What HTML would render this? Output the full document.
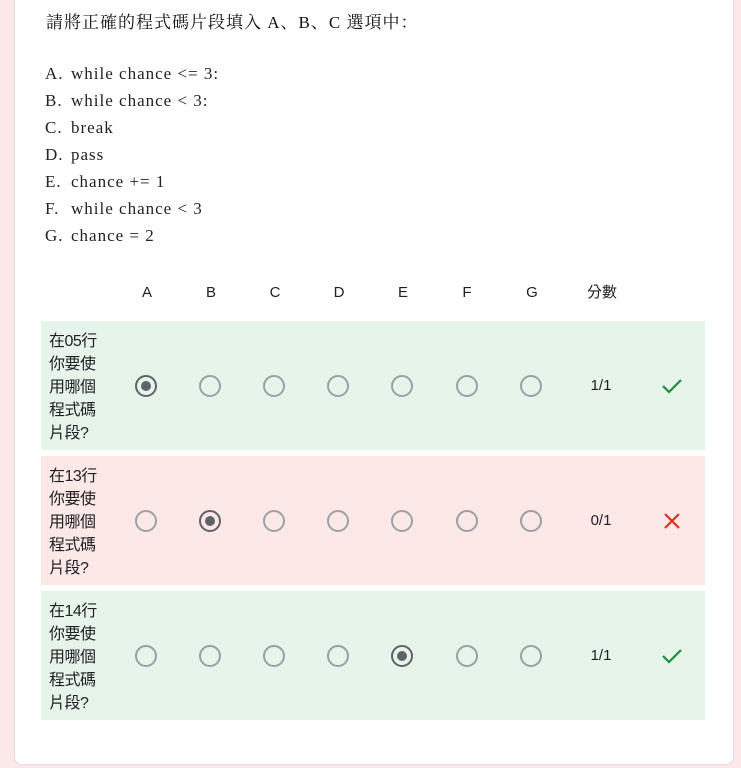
<!DOCTYPE html>
<html><head><meta charset="utf-8"><style>
html,body{margin:0;padding:0;}
body{width:741px;height:768px;background:#fce8e8;position:relative;overflow:hidden;font-family:"Liberation Sans","Noto Sans CJK TC",sans-serif;color:#202124;}
.card{position:absolute;left:14px;top:-10px;width:718px;height:773px;background:#fff;border:1px solid #dadce0;border-radius:8px;}
.title{position:absolute;left:46px;top:8px;font-family:"Liberation Serif","Noto Serif CJK SC",serif;font-size:17px;color:#111;letter-spacing:1px;}
.list{position:absolute;left:45px;top:64px;font-family:"Liberation Serif",serif;font-size:17px;color:#222;letter-spacing:1px;}
.list div{height:27px;line-height:20px;}
.list span{display:inline-block;width:26px;}
.hdr{position:absolute;top:284px;font-size:15px;line-height:18px;transform:translateX(-50%);}
.row{position:absolute;left:41px;width:664px;height:129px;}
.g{background:#e6f4ea}.r{background:#fce8e6}
.lab{position:absolute;left:8px;top:9px;font-size:16px;line-height:23px;width:60px;letter-spacing:-0.5px;}
.rad{position:absolute;top:54px;width:18px;height:18px;border:2px solid #9aa0a6;border-radius:50%;margin-left:-11px;}
.rad.s{border-color:#5f6368;}
.rad.s::after{content:"";position:absolute;left:4px;top:4px;width:10px;height:10px;border-radius:50%;background:#5f6368;}
.sc{position:absolute;top:56px;font-size:15px;transform:translateX(-50%);}
.ic{position:absolute;top:54px;left:620px;}
</style></head><body>
<div class="card"></div>
<div class="title">請將正確的程式碼片段填入 A、B、C 選項中：</div>
<div class="list">
<div><span>A.</span>while chance &lt;= 3:</div>
<div><span>B.</span>while chance &lt; 3:</div>
<div><span>C.</span>break</div>
<div><span>D.</span>pass</div>
<div><span>E.</span>chance += 1</div>
<div><span>F.</span>while chance &lt; 3</div>
<div><span>G.</span>chance = 2</div>
</div>
<div class="hdr" style="left:147px">A</div>
<div class="hdr" style="left:211px">B</div>
<div class="hdr" style="left:275px">C</div>
<div class="hdr" style="left:339px">D</div>
<div class="hdr" style="left:403px">E</div>
<div class="hdr" style="left:467px">F</div>
<div class="hdr" style="left:532px">G</div>
<div class="hdr" style="left:602px">分數</div>

<div class="row g" style="top:321px">
<div class="lab">在05行你要使用哪個程式碼片段?</div>
<div class="rad s" style="left:105px"></div><div class="rad" style="left:169px"></div><div class="rad" style="left:233px"></div><div class="rad" style="left:297px"></div><div class="rad" style="left:361px"></div><div class="rad" style="left:426px"></div><div class="rad" style="left:490px"></div>
<div class="sc" style="left:560px">1/1</div>
<svg class="ic" width="22" height="22" viewBox="0 0 22 22"><path d="M2 11l6 6L20 5" fill="none" stroke="#1e8e3e" stroke-width="2.2"/></svg>
</div>
<div class="row r" style="top:456px">
<div class="lab">在13行你要使用哪個程式碼片段?</div>
<div class="rad" style="left:105px"></div><div class="rad s" style="left:169px"></div><div class="rad" style="left:233px"></div><div class="rad" style="left:297px"></div><div class="rad" style="left:361px"></div><div class="rad" style="left:426px"></div><div class="rad" style="left:490px"></div>
<div class="sc" style="left:560px">0/1</div>
<svg class="ic" width="22" height="22" viewBox="0 0 22 22"><path d="M4 4l14 14M18 4L4 18" fill="none" stroke="#d93025" stroke-width="2.2"/></svg>
</div>
<div class="row g" style="top:591px">
<div class="lab">在14行你要使用哪個程式碼片段?</div>
<div class="rad" style="left:105px"></div><div class="rad" style="left:169px"></div><div class="rad" style="left:233px"></div><div class="rad" style="left:297px"></div><div class="rad s" style="left:361px"></div><div class="rad" style="left:426px"></div><div class="rad" style="left:490px"></div>
<div class="sc" style="left:560px">1/1</div>
<svg class="ic" width="22" height="22" viewBox="0 0 22 22"><path d="M2 11l6 6L20 5" fill="none" stroke="#1e8e3e" stroke-width="2.2"/></svg>
</div>
</body></html>
